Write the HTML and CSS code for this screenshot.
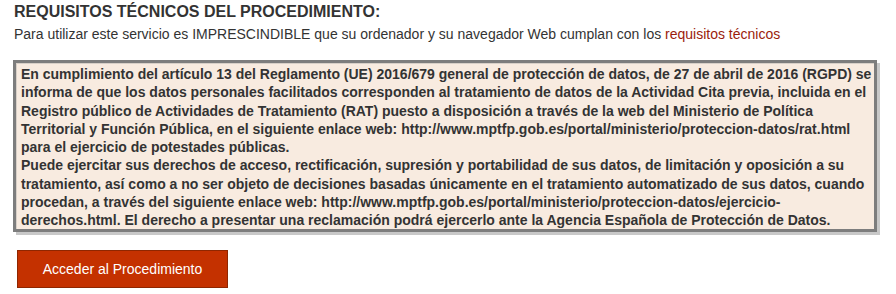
FILE: index.html
```html
<!DOCTYPE html>
<html lang="es">
<head>
<meta charset="utf-8">
<title>Requisitos técnicos</title>
<link rel="stylesheet" href="styles.css">
</head>
<body>
<div class="page">
  <h2 class="title">REQUISITOS TÉCNICOS DEL PROCEDIMIENTO:</h2>
  <p class="intro">Para utilizar este servicio es IMPRESCINDIBLE que su ordenador y su navegador Web cumplan con los <a href="#" class="link">requisitos técnicos</a></p>
  <div class="notice">
    <p class="notice-text">En cumplimiento del artículo 13 del Reglamento (UE) 2016/679 general de protección de datos, de 27 de abril de 2016 (RGPD) se informa de que los datos personales facilitados corresponden al tratamiento de datos de la Actividad Cita previa, incluida en el Registro público de Actividades de Tratamiento (RAT) puesto a disposición a través de la web del Ministerio de Política Territorial y Función Pública, en el siguiente enlace web: http://www.mptfp.gob.es/portal/ministerio/proteccion-datos/rat.html para el ejercicio de potestades públicas.</p>
    <p class="notice-text">Puede ejercitar sus derechos de acceso, rectificación, supresión y portabilidad de sus datos, de limitación y oposición a su tratamiento, así como a no ser objeto de decisiones basadas únicamente en el tratamiento automatizado de sus datos, cuando procedan, a través del siguiente enlace web: http://www.mptfp.gob.es/portal/ministerio/proteccion-datos/ejercicio-derechos.html. El derecho a presentar una reclamación podrá ejercerlo ante la Agencia Española de Protección de Datos.</p>
  </div>
  <button class="btn" type="button">Acceder al Procedimiento</button>
</div>
</body>
</html>
```

FILE: styles.css
```css
html, body {
  margin: 0;
  padding: 0;
  background: #ffffff;
}
.page {
  padding: 3px 19px 0 14px;
  font-family: "Liberation Sans", Arial, sans-serif;
  color: #333333;
}
.title {
  margin: 0;
  font-size: 16px;
  font-weight: bold;
  line-height: 18px;
  color: #333333;
}
.intro {
  margin: 4px 0 0 0;
  font-size: 14px;
  line-height: 18px;
}
.link {
  color: #9b1c0c;
  text-decoration: none;
}
.notice {
  margin: 17px 0 0 -1px;
  border: 3px solid #7d7d7d;
  box-shadow: 3px 3px 0 #c8c8c8, inset 1px 1px 0 #d8d0c8;
  background: #f8ebe0;
  padding: 2px 1px 0 5px;
}
.notice-text {
  margin: 0;
  font-size: 14px;
  font-weight: bold;
  line-height: 18.25px;
  color: #333333;
}
.btn {
  display: block;
  margin: 18px 0 0 3px;
  width: 211px;
  height: 38px;
  background: #c43100;
  border: 1px solid #8f2600;
  color: #ffffff;
  font-family: "Liberation Sans", Arial, sans-serif;
  font-size: 14px;
  padding: 0;
  cursor: pointer;
}
```
